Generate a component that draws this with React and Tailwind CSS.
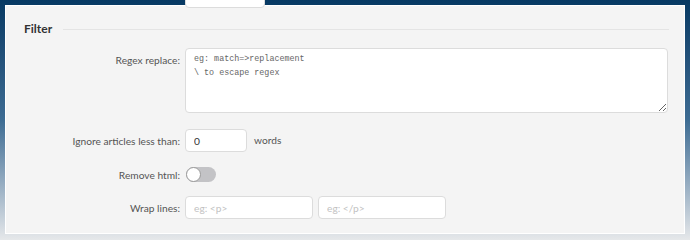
import React, { useState } from 'react';

const labelCls = 'w-[174px] shrink-0 text-right text-[10.2px] leading-[14px] text-[#555]';
const inputCls =
  'h-[23px] rounded-[4px] border border-[#dcdcdc] bg-white px-[8px] text-[10.2px] text-[#333] outline-none placeholder:text-[#c2c2c2]';

const Toggle = ({ on, onChange }) => (
  <button
    onClick={() => onChange(!on)}
    className={`relative h-[15px] w-[30px] rounded-full ${on ? 'bg-[#3b82c4]' : 'bg-[#c3c3c6]'}`}
  >
    <span
      className={`absolute top-0 h-[15px] w-[15px] rounded-full border border-[#9a9a9a] bg-white ${on ? 'left-[15px]' : 'left-0'}`}
    />
  </button>
);

const App = () => {
  const [removeHtml, setRemoveHtml] = useState(false);
  const [minWords, setMinWords] = useState('0');

  return (
    <div
      className="relative h-[240px] w-full overflow-hidden bg-gradient-to-b from-[#063963] via-[#3d6c93] to-[#e6e8ea] pl-[5px] pt-[5px]"
      style={{ fontFamily: 'Lato, "Open Sans", sans-serif' }}
    >
      <div className="relative h-[229px] w-[680px] border border-white bg-[#f4f4f4]">
        {/* tail of the previous field, scrolled out of view */}
        <div className="absolute left-[179px] top-[-21px] h-[23px] w-[80px] rounded-[4px] border border-[#dcdcdc] bg-white" />

        {/* Section header */}
        <div className="mt-[13px] flex h-[20px] items-center pl-[18px] pr-[15px]">
          <h3 className="text-[12px] font-bold text-[#333]">Filter</h3>
          <div className="ml-[11px] h-px flex-1 bg-[#e4e4e4]" />
        </div>

        {/* Regex replace */}
        <div className="mt-[9px] flex">
          <label className={`${labelCls} pt-[5px]`}>Regex replace:</label>
          <textarea
            className="ml-[5px] h-[65px] w-[483px] rounded-[4px] border border-[#dcdcdc] bg-white px-[8px] pt-[3px] text-[8.4px] leading-[14px] text-[#333] outline-none placeholder:text-[#666]"
            style={{ fontFamily: '"Liberation Mono", monospace' }}
            placeholder={'eg: match=>replacement\n\\ to escape regex'}
          />
        </div>

        {/* Ignore articles */}
        <div className="mt-[16px] flex items-center">
          <label className={labelCls}>Ignore articles less than:</label>
          <input
            className={`${inputCls} ml-[5px] w-[62px]`}
            value={minWords}
            onChange={(e) => setMinWords(e.target.value)}
          />
          <span className="ml-[7px] text-[10.2px] text-[#555]">words</span>
        </div>

        {/* Remove html */}
        <div className="mt-[11px] flex h-[23px] items-center">
          <label className={labelCls}>Remove html:</label>
          <div className="ml-[6px] flex">
            <Toggle on={removeHtml} onChange={setRemoveHtml} />
          </div>
        </div>

        {/* Wrap lines */}
        <div className="mt-[10px] flex items-center">
          <label className={labelCls}>Wrap lines:</label>
          <input className={`${inputCls} ml-[5px] w-[128px]`} placeholder="eg: <p>" />
          <input className={`${inputCls} ml-[5px] w-[128px]`} placeholder="eg: </p>" />
        </div>
      </div>
    </div>
  );
};

export default App;
